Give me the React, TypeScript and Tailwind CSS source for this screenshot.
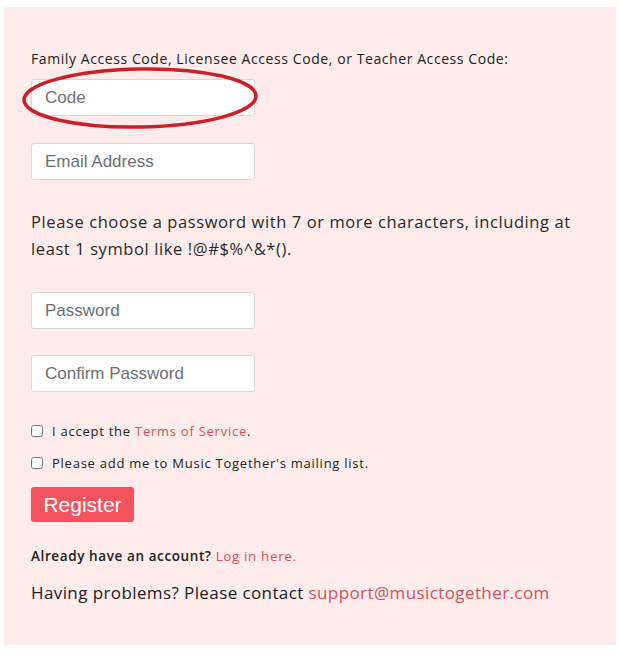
import React from 'react';

const inputCls =
  'block w-[224px] h-[37px] px-[13px] bg-white border border-[#d9d9d9] rounded-[3px] text-[17px] text-[#333] placeholder:text-[#6b6f75] outline-none font-["Liberation_Sans",Arial,sans-serif]';

export default function App() {
  return (
    <div className="w-[619px] h-[655px] bg-white pt-[7px] pl-[4px] font-['Open_Sans',sans-serif] text-[#222]">
      <div className="relative w-[612px] h-[638px] bg-[#fdeceb] pl-[27px] pt-[42px]">
        <p className="text-[14px] leading-[19px] tracking-[0.58px]">
          Family Access Code, Licensee Access Code, or Teacher Access Code:
        </p>
        <input className={`${inputCls} mt-[11px]`} placeholder="Code" />
        <input className={`${inputCls} mt-[27px]`} placeholder="Email Address" />

        <p className="mt-[28px] w-[560px] text-[16.5px] leading-[27px] tracking-[0.6px] text-[#2a2a2a]">
          Please choose a password with 7 or more characters, including at least 1 symbol like !@#$%^&amp;*().
        </p>

        <input className={`${inputCls} mt-[30px]`} placeholder="Password" />
        <input className={`${inputCls} mt-[26px]`} placeholder="Confirm Password" />

        <div className="mt-[30px] flex flex-col gap-[14px] text-[13px] leading-[18px] tracking-[0.75px]">
          <label className="flex items-center gap-[9px]">
            <input type="checkbox" className="w-[12px] h-[12px] m-0" />
            <span>
              I accept the <a className="text-[#d6505a]">Terms of Service</a>.
            </span>
          </label>
          <label className="flex items-center gap-[9px]">
            <input type="checkbox" className="w-[12px] h-[12px] m-0" />
            <span>Please add me to Music Together's mailing list.</span>
          </label>
        </div>

        <button className="mt-[15px] w-[103px] h-[35px] rounded-[3px] bg-[#f2535e] text-white text-[21px] font-['Liberation_Sans',Arial,sans-serif]">
          Register
        </button>

        <p className="mt-[25px] text-[13.5px] leading-[18px] tracking-[0.6px] font-semibold">
          Already have an account? <a className="text-[#d6505a] font-normal">Log in here.</a>
        </p>
        <p className="mt-[16px] text-[17px] leading-[24px] tracking-[0.4px]">
          Having problems? Please contact <a className="text-[#d6505a]">support@musictogether.com</a>
        </p>

        {/* red annotation circle round the code field */}
        <svg className="absolute left-[14px] top-[58px]" width="244" height="66" viewBox="0 0 244 66">
          <ellipse cx="122" cy="33" rx="116" ry="29" fill="none" stroke="#cc1f2a" strokeWidth="3.5" transform="rotate(-1 122 33)" />
        </svg>
      </div>
    </div>
  );
}
